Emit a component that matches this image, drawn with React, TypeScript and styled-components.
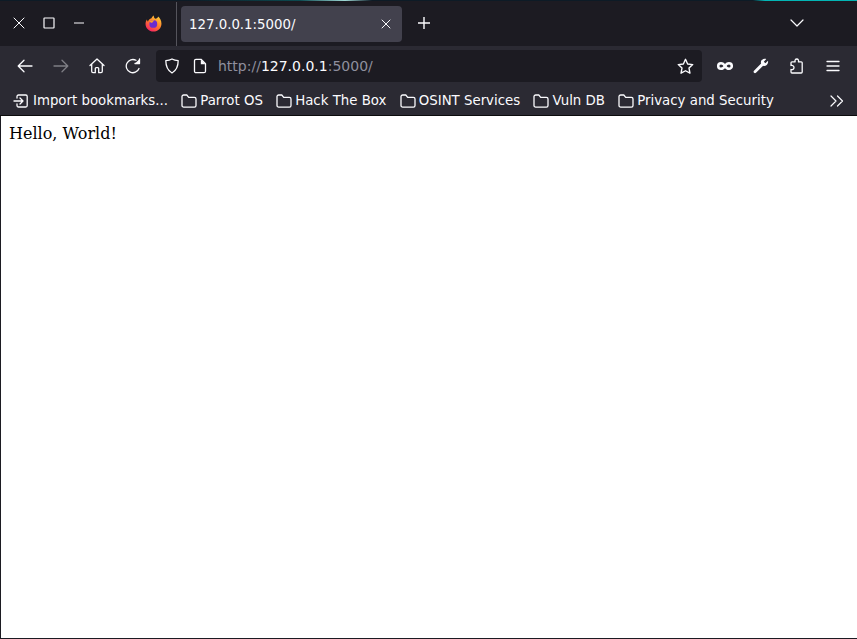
import React from 'react';
import styled, { createGlobalStyle } from 'styled-components';

const GlobalStyle = createGlobalStyle`
  html, body {
    margin: 0;
    padding: 0;
    height: 100%;
    overflow: hidden;
    background: #fff;
  }
  #root {
    height: 100%;
  }
`;

const stroke = { fill: 'none', stroke: 'currentColor', strokeWidth: 1.3, strokeLinecap: 'round', strokeLinejoin: 'round' } as const;

const FolderIcon = () => (
  <FolderSvg viewBox="0 0 16 16">
    <path {...stroke} d="M1 3.600C1 2.600 1.700 2 2.700 2h3.100l1.900 2.300h5.700c1 0 1.600.7 1.600 1.600v6.500c0 1-.7 1.700-1.600 1.700H2.700c-1 0-1.700-.7-1.700-1.700V3.600z" />
  </FolderSvg>
);

const bookmarks = ['Parrot OS', 'Hack The Box', 'OSINT Services', 'Vuln DB', 'Privacy and Security'];

export default function App() {
  return (
    <Window>
      <GlobalStyle />
      <Glow />
      <TabStrip>
        <WindowButtons>
          <IconBox>
            <svg width="12" height="12" viewBox="0 0 12 12"><path {...stroke} strokeWidth={1} d="M1 1l10 10M11 1L1 11" /></svg>
          </IconBox>
          <IconBox>
            <svg width="12" height="12" viewBox="0 0 12 12"><rect x="1" y="1" width="10" height="10" rx="0.5" fill="none" stroke="currentColor" strokeWidth="1.2" /></svg>
          </IconBox>
          <IconBox>
            <svg width="12" height="12" viewBox="0 0 12 12"><path fill="none" stroke="currentColor" strokeWidth="1" d="M1 6h10" /></svg>
          </IconBox>
        </WindowButtons>
        <FirefoxLogo viewBox="0 0 16 16">
          <defs>
            <linearGradient id="fx" x1="0.8" y1="0" x2="0.2" y2="1">
              <stop offset="0" stopColor="#ffd53a" />
              <stop offset="0.5" stopColor="#ff7a2b" />
              <stop offset="1" stopColor="#f5176a" />
            </linearGradient>
          </defs>
          <path fill="url(#fx)" d="M8 15.600C3.800 15.600.5 12.400.5 8.500c0-1.700.5-3.200 1.300-4.200.1 1 .5 1.600 1 2 .4-1.700 1.700-2.700 3.300-3.300C6.500 1.900 7.200.9 8.300.4c-.2 1.400.5 2.400 1.500 3.100 1.300-.1 2.200-.8 2.500-2.100 1.800 1.400 3.200 3.900 3.200 6.800 0 4.200-3.300 7.400-7.500 7.400z" />
          <circle cx="7.800" cy="8.400" r="3.700" fill="#6a2bd0" />
          <path fill="#ff9a2b" d="M4.300 6.300c1.300-1.400 3.400-1.600 4.800-.9-1.200.2-1.900.9-2.200 1.800-.5.1-1.500.1-2.600-.9z" />
        </FirefoxLogo>
        <TabDivider />
        <Tab>
          <TabTitle>127.0.0.1:5000/</TabTitle>
          <svg width="10" height="10" viewBox="0 0 10 10"><path {...stroke} strokeWidth={1} d="M1 1l8 8M9 1L1 9" /></svg>
        </Tab>
        <NewTab>
          <svg width="14" height="14" viewBox="0 0 14 14"><path fill="none" stroke="currentColor" strokeWidth="1.4" d="M7 1v12M1 7h12" /></svg>
        </NewTab>
        <TabListButton>
          <svg width="14" height="8" viewBox="0 0 14 8"><path {...stroke} strokeWidth={1.2} d="M1 1l6 6 6-6" /></svg>
        </TabListButton>
      </TabStrip>

      <NavBar>
        <NavButton>
          <svg width="16" height="16" viewBox="0 0 16 16"><path {...stroke} d="M15 8H1.500M7 2.200 1.200 8 7 13.800" /></svg>
        </NavButton>
        <NavButton $disabled>
          <svg width="16" height="16" viewBox="0 0 16 16"><path {...stroke} d="M1 8h13.500M9 2.200 14.800 8 9 13.800" /></svg>
        </NavButton>
        <NavButton>
          <svg width="16" height="16" viewBox="0 0 16 16"><path {...stroke} d="M1 7.500 8 1l7 6.500M2.700 6.200v7.100c0 .9.5 1.400 1.300 1.400h2.300v-4.200c0-.6.3-.9.8-.9h1.800c.5 0 .8.300.8.900v4.200H12c.8 0 1.300-.5 1.300-1.400V6.200" /></svg>
        </NavButton>
        <NavButton>
          <svg width="16" height="16" viewBox="0 0 16 16"><path {...stroke} d="M14 10.500A6.600 6.600 0 1 1 11 2.300M14.500 1v4.500H10" /><path fill="currentColor" d="M10 5.500h4.500V1z" /></svg>
        </NavButton>
        <UrlBar>
          <UrlIcon viewBox="0 0 16 16">
            <path {...stroke} d="M8 1c2 1.100 4 1.500 6.200 1.600 0 5.700-1.800 10-6.200 12.400-4.400-2.400-6.200-6.700-6.200-12.400C4 2.500 6 2.100 8 1z" />
          </UrlIcon>
          <PageIcon viewBox="0 0 16 16">
            <path {...stroke} d="M2.500 2.800c0-.9.6-1.500 1.500-1.500h5l4.500 4.500v7.400c0 .9-.6 1.500-1.500 1.500H4c-.9 0-1.500-.6-1.500-1.500V2.800z" />
            <path fill="currentColor" d="M8.800 1.500v4.700h4.700z" />
          </PageIcon>
          <UrlText>
            http://<UrlHost>127.0.0.1</UrlHost>:5000/
          </UrlText>
          <svg width="17" height="17" viewBox="0 0 16 16"><path {...stroke} d="M8 1.200l2 4.400 4.800.6-3.500 3.300.9 4.800L8 12l-4.200 2.300.9-4.800L1.200 6.200 6 5.600z" /></svg>
        </UrlBar>
        <ToolIcons>
          <ToolIcon>
            <svg width="18" height="18" viewBox="-1 0 18 18"><path fill="none" stroke="currentColor" strokeWidth="2.500" d="M9 9C7.800 7 6.500 6.200 5 6.200a2.800 2.800 0 0 0 0 5.600c1.500 0 2.800-.8 4-2.800 1.200-2 2.500-2.800 4-2.800a2.800 2.800 0 0 1 0 5.600c-1.500 0-2.800-.8-4-2.800z" /></svg>
          </ToolIcon>
          <ToolIcon>
            <svg width="16" height="16" viewBox="0 0 16 16"><path fill="currentColor" d="M15 2.800l-2.600 2.500-1.600-1.600L13.300 1.100c-1.800-.6-3.700-.1-4.600 1-.9 1.100-1 2.400-.6 3.500L1 12.700c-.6.7-.6 1.500 0 2.100.6.6 1.400.6 2 0l7.100-7.100c1.200.4 2.600.2 3.600-.7 1.100-1 1.600-2.500 1.300-4.200z" /></svg>
          </ToolIcon>
          <ToolIcon>
            <svg width="16" height="16" viewBox="0 0 16 16"><path {...stroke} d="M2 7.500V4.800c0-.6.4-1 1-1h3.200C5.500 2.600 6.300 1 7.800 1s2.200 1.600 1.600 2.800h2.800c.6 0 1 .4 1 1v9.200c0 .6-.4 1-1 1H3c-.6 0-1-.4-1-1v-2.500c1.400.5 3-.2 3-1.900S3.400 7 2 7.500z" /></svg>
          </ToolIcon>
          <ToolIcon>
            <svg width="16" height="16" viewBox="0 0 16 16"><path {...stroke} d="M2 3.500h12M2 8h12M2 12.500h12" /></svg>
          </ToolIcon>
        </ToolIcons>
      </NavBar>

      <BookmarksBar>
        <ImportItem>
          <svg width="16" height="16" viewBox="0 0 16 16"><path {...stroke} d="M1 8h9M7 5l3 3-3 3M4 5V3.500C4 2.700 4.600 2 5.500 2h7.300c.8 0 1.400.7 1.400 1.500v9c0 .8-.6 1.500-1.400 1.500H5.500C4.600 14 4 13.300 4 12.500V11" /></svg>
          <span>Import bookmarks...</span>
        </ImportItem>
        {bookmarks.map((name) => (
          <Bookmark key={name}>
            <FolderIcon />
            <span>{name}</span>
          </Bookmark>
        ))}
        <Overflow>
          <svg width="14" height="12" viewBox="0 0 14 12"><path {...stroke} strokeWidth={1.2} d="M1 1l5 5-5 5M7.500 1l5 5-5 5" /></svg>
        </Overflow>
      </BookmarksBar>

      <Content>Hello, World!</Content>
    </Window>
  );
}

const Window = styled.div`
  position: relative;
  display: flex;
  flex-direction: column;
  height: 100%;
  box-sizing: border-box;
  font-family: 'DejaVu Sans', sans-serif;
  color: #fbfbfe;
`;

const Glow = styled.div`
  position: absolute;
  top: 0;
  left: 0;
  right: 0;
  height: 1px;
  background: linear-gradient(
    90deg,
    #0d1b26 0,
    #0d1b26 187px,
    #0c4a50 300px,
    #9fd8d5 345px,
    #0d1b26 372px,
    #0d1b26 753px,
    #03b5b5 765px,
    #03b5b5 857px
  );
`;

const TabStrip = styled.div`
  display: flex;
  align-items: center;
  height: 46px;
  background: #1c1b22;
  flex-shrink: 0;
`;

const WindowButtons = styled.div`
  display: flex;
  align-items: center;
  gap: 18px;
  padding-left: 13px;
`;

const IconBox = styled.div`
  display: flex;
  width: 12px;
  height: 12px;
`;

const FirefoxLogo = styled.svg`
  width: 17px;
  height: 17px;
  margin-left: 60px;
  margin-right: 14px;
`;

const TabDivider = styled.div`
  width: 1px;
  height: 44px;
  margin-top: 2px;
  background: #55545c;
`;

const Tab = styled.div`
  display: flex;
  align-items: center;
  justify-content: space-between;
  width: 221px;
  height: 36px;
  margin-left: 4px;
  margin-top: 2px;
  padding: 0 11px 0 8px;
  box-sizing: border-box;
  background: #42414d;
  border-radius: 4px;
`;

const TabTitle = styled.span`
  font-size: 13.33px;
`;

const NewTab = styled.div`
  display: flex;
  margin-left: 15px;
`;

const TabListButton = styled.div`
  display: flex;
  margin-left: auto;
  margin-right: 53px;
`;

const NavBar = styled.div`
  display: flex;
  align-items: center;
  height: 40px;
  padding: 0 16px 0 17px;
  background: #2b2a33;
  flex-shrink: 0;
`;

const NavButton = styled.div<{ $disabled?: boolean }>`
  display: flex;
  width: 16px;
  height: 16px;
  margin-right: 20px;
  opacity: ${(p) => (p.$disabled ? 0.4 : 1)};
  &:nth-child(4) {
    margin-right: 15px;
  }
`;

const UrlBar = styled.div`
  display: flex;
  align-items: center;
  width: 546px;
  height: 32px;
  padding: 0 8px 0 8px;
  box-sizing: border-box;
  background: #1c1b22;
  border-radius: 4px;
`;

const UrlIcon = styled.svg`
  width: 16px;
  height: 16px;
`;

const PageIcon = styled.svg`
  width: 16px;
  height: 16px;
  margin-left: 12px;
`;

const UrlText = styled.div`
  flex: 1;
  margin-left: 10px;
  font-size: 14px;
  color: #8f8f9d;
`;

const UrlHost = styled.span`
  color: #fbfbfe;
`;

const ToolIcons = styled.div`
  display: flex;
  align-items: center;
  gap: 20px;
  margin-left: auto;
`;

const ToolIcon = styled.div`
  display: flex;
`;

const BookmarksBar = styled.div`
  display: flex;
  align-items: center;
  height: 29px;
  padding-left: 13px;
  background: #2b2a33;
  border-bottom: 1px solid #0c0c0d;
  flex-shrink: 0;
`;

const Bookmark = styled.div`
  display: flex;
  align-items: center;
  gap: 3px;
  margin-left: 13.3px;
  font-size: 13.33px;
  white-space: nowrap;
`;

const ImportItem = styled(Bookmark)`
  margin-left: 0;
  gap: 4px;
`;

const FolderSvg = styled.svg`
  width: 16px;
  height: 16px;
`;

const Overflow = styled.div`
  display: flex;
  margin-left: auto;
  margin-right: 13px;
`;

const Content = styled.div`
  flex: 1;
  padding: 8px;
  background: #fff;
  border-left: 1px solid #1c1b22;
  border-bottom: 1px solid #1c1b22;
  font-family: 'DejaVu Serif', serif;
  font-size: 16px;
  color: #000;
`;
